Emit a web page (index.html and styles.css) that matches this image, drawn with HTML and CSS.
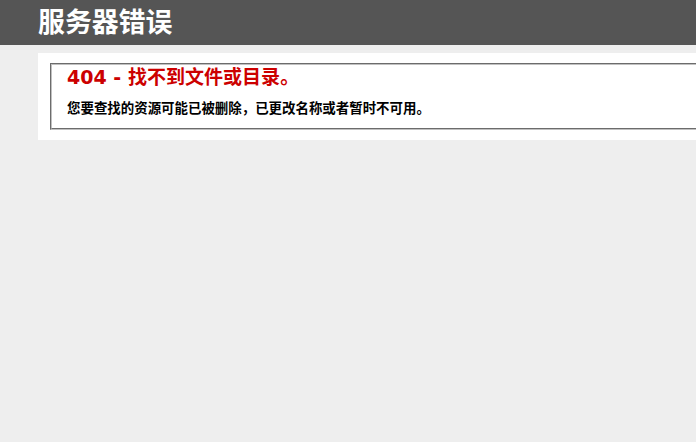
FILE: index.html
```
<!DOCTYPE html>
<html lang="zh-CN">
<head>
    <meta charset="UTF-8">
    <title>404 - 找不到文件或目录。</title>
    <link rel="stylesheet" href="styles.css">
</head>
<body>
    <div id="header"><h1>服务器错误</h1></div>
    <div id="content">
        <div class="content-container">
            <fieldset>
                <h2>404 - 找不到文件或目录。</h2>
                <h3>您要查找的资源可能已被删除，已更改名称或者暂时不可用。</h3>
            </fieldset>
        </div>
    </div>
</body>
</html>
```
FILE: styles.css
```
body{
    margin: 0;
    font-size: 11.2px;
    font-family: "DejaVu Sans", "Noto Sans CJK SC", sans-serif;
    background: #eeeeee;
}
fieldset{
    margin: 0 2px;
    padding: 0 15px 10px 15px;
    border: 2px groove #c0c0c0;
}
h1{
    font-size: 26.88px;
    line-height: 33px;
    margin: 0;
    color: #fff;
}
h2{
    font-size: 19.04px;
    line-height: 25px;
    margin: 0;
    color: #cc0000;
}
h3{
    font-size: 13.44px;
    line-height: 18px;
    margin: 10px 0 0 0;
    color: #000;
}
#header{
    padding: 6px 38px;
    color: #fff;
    background-color: #555555;
}
#content{
    margin: 0 0 0 38px;
    overflow: hidden;
}
.content-container{
    background: #fff;
    width: 680px;
    margin-top: 8px;
    padding: 10px;
}
```
